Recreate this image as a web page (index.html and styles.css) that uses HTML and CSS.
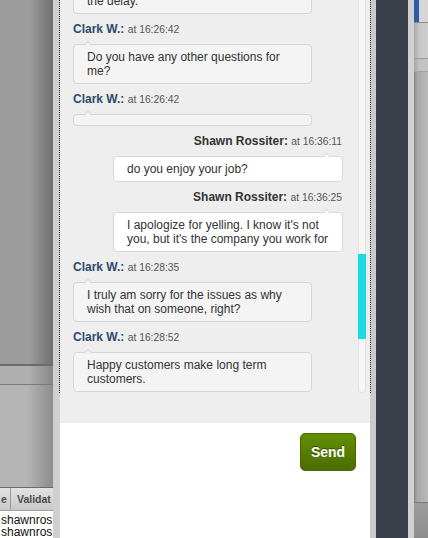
FILE: index.html
```html
<!DOCTYPE html>
<html lang="en">
<head>
<meta charset="utf-8">
<title>Chat</title>
<link rel="stylesheet" href="styles.css">
</head>
<body>
<div class="screen">
  <div class="desk-left">
    <div class="dl-top"></div>
    <div class="dl-bar"></div>
    <div class="dl-mid"></div>
    <div class="dl-head">
      <span class="dl-cell dl-cell-a">e</span>
      <span class="dl-cell dl-cell-b">Validat</span>
    </div>
    <div class="dl-rows">
      <div class="dl-row">shawnros</div>
      <div class="dl-row">shawnros</div>
    </div>
  </div>
  <div class="edge edge-left"></div>
  <div class="chat">
    <div class="log-wrap">
      <div class="log">
        <div class="msg msg-in">
          <div class="msg-head"><span class="who">Clark W.:</span> <span class="when">at 16:26:30</span></div>
          <div class="bubble">I'm really sorry about<br>the delay.</div>
        </div>
        <div class="msg msg-in">
          <div class="msg-head"><span class="who">Clark W.:</span> <span class="when">at 16:26:42</span></div>
          <div class="bubble">Do you have any other questions for me?</div>
        </div>
        <div class="msg msg-in">
          <div class="msg-head"><span class="who">Clark W.:</span> <span class="when">at 16:26:42</span></div>
          <div class="bubble"></div>
        </div>
        <div class="msg msg-out">
          <div class="msg-head"><span class="who">Shawn Rossiter:</span> <span class="when">at 16:36:11</span></div>
          <div class="bubble">do you enjoy your job?</div>
        </div>
        <div class="msg msg-out">
          <div class="msg-head"><span class="who">Shawn Rossiter:</span> <span class="when">at 16:36:25</span></div>
          <div class="bubble">I apologize for yelling. I know it's not you, but it's the company you work for</div>
        </div>
        <div class="msg msg-in">
          <div class="msg-head"><span class="who">Clark W.:</span> <span class="when">at 16:28:35</span></div>
          <div class="bubble">I truly am sorry for the issues as why wish that on someone, right?</div>
        </div>
        <div class="msg msg-in">
          <div class="msg-head"><span class="who">Clark W.:</span> <span class="when">at 16:28:52</span></div>
          <div class="bubble">Happy customers make long term customers.</div>
        </div>
      </div>
      <div class="scrollbar"><div class="thumb"></div></div>
    </div>
    <div class="log-foot"></div>
    <div class="compose">
      <button class="send" type="button">Send</button>
    </div>
  </div>
  <div class="edge edge-right"></div>
  <div class="dock"></div>
  <div class="edge edge-far"></div>
  <div class="desk-right">
    <div class="dr-top">
      <div class="dr-blue"></div>
      <div class="dr-grey"></div>
    </div>
    <div class="dr-bar"></div>
    <div class="dr-bar2"></div>
    <div class="dr-main"></div>
    <div class="dr-foot"></div>
  </div>
</div>
</body>
</html>
```
FILE: styles.css
```css
html, body {
  margin: 0;
  padding: 0;
}

body {
  font-family: "Liberation Sans", Arial, sans-serif;
  background: #9c9c9c;
  overflow: hidden;
}

.screen {
  display: flex;
  width: 428px;
  height: 538px;
}

/* ---------- desktop app behind, left ---------- */
.desk-left {
  flex: none;
  width: 53px;
  display: flex;
  flex-direction: column;
  overflow: hidden;
}

.dl-top {
  height: 364px;
  background: linear-gradient(to right, #9c9c9c 55%, #6f6f6f);
}

.dl-bar {
  height: 18px;
  border-top: 2px solid #6c6c6c;
  border-bottom: 1px solid #7a7a7a;
  background: linear-gradient(to right, #afafaf 55%, #868686);
}

.dl-mid {
  flex: 1;
  border-bottom: 1px solid #6a6a6a;
  background: linear-gradient(to right, #b5b5b5 50%, #8d8d8d);
}

.dl-head {
  height: 22px;
  display: flex;
  align-items: center;
  border-bottom: 1px solid #a3a3a3;
  background: linear-gradient(#e3e3e3, #c8c8c8);
  font-family: "Liberation Sans", Arial, sans-serif;
  font-weight: bold;
  font-size: 10.5px;
  color: #4a4a4a;
}

.dl-cell {
  display: flex;
  height: 100%;
  align-items: center;
  white-space: nowrap;
}

.dl-cell-a {
  flex: none;
  width: 11px;
  padding-left: 1px;
  box-sizing: border-box;
  border-right: 1px solid #9a9a9a;
}

.dl-cell-b {
  padding-left: 6px;
}

.dl-rows {
  height: 27px;
  box-sizing: border-box;
  padding: 4px 0 0 1px;
  background: #fff;
  font-family: "Liberation Sans", Arial, sans-serif;
  font-size: 12px;
  line-height: 11.5px;
  color: #111;
  white-space: nowrap;
}

/* ---------- window edges ---------- */
.edge {
  flex: none;
}

.edge-left {
  width: 7px;
  background: #cfcfcf;
}

.edge-right {
  width: 6px;
  background: #cbcbcb;
}

.edge-far {
  width: 6px;
  background: #d0d0d0;
}

.dock {
  flex: none;
  width: 32px;
  background: #3a414b;
}

/* ---------- chat panel ---------- */
.chat {
  flex: none;
  width: 310px;
  display: flex;
  flex-direction: column;
  background: #fff;
}

.log-wrap {
  position: relative;
  margin: 0 -1px;
  border-left: 1px dotted #222;
  border-right: 1px dotted #222;
}

.log {
  height: 393px;
  box-sizing: border-box;
  display: flex;
  flex-direction: column;
  justify-content: flex-end;
  overflow: hidden;
  padding: 0 27px 1px 13px;
  background: #eeeeee;
}

.msg {
  flex: none;
  margin-top: 7px;
}

.msg-head {
  height: 16px;
  line-height: 16px;
  font-size: 12px;
  white-space: nowrap;
}

.who {
  font-weight: bold;
}

.when {
  font-size: 10.3px;
  color: #555;
}

.msg-in .who {
  color: #2e4a6b;
}

.msg-out .who {
  color: #333;
}

.msg-out .msg-head {
  text-align: right;
  padding-right: 1px;
}

.bubble {
  position: relative;
  margin-top: 7px;
  padding: 5px 13px;
  border: 1px solid #d5d5d5;
  border-radius: 4px;
  font-size: 12px;
  line-height: 14px;
  color: #333;
}

.bubble::before {
  content: "";
  position: absolute;
  top: -3px;
  width: 5px;
  height: 5px;
  background: inherit;
  border-top: 1px solid;
  border-left: 1px solid;
  border-color: inherit;
  transform: rotate(45deg);
}

.msg-in .bubble {
  margin-right: 31px;
  background: #f4f4f4;
  border-color: #d5d5d5;
}

.msg-in .bubble::before {
  left: 11px;
}

.msg-out .bubble {
  margin-left: 40px;
  padding-right: 8px;
  background: #fff;
  border-color: #d9d9d9;
}

.msg-out .bubble::before {
  right: 12px;
}

.scrollbar {
  position: absolute;
  top: 0;
  right: 4px;
  width: 8px;
  height: 393px;
  box-sizing: border-box;
  border: 1px solid #e4e4e4;
  border-top: none;
  border-radius: 0 0 4px 4px;
  background: #f6f6f6;
}

.thumb {
  position: absolute;
  top: 254px;
  left: -1px;
  right: -1px;
  height: 85px;
  background: #19dbe6;
}

.log-foot {
  height: 30px;
  background: #eeeeee;
}

.compose {
  flex: 1;
  display: flex;
  justify-content: flex-end;
  align-items: flex-start;
  padding: 10px 14px 0 0;
  background: #fff;
}

.send {
  width: 56px;
  height: 38px;
  padding: 0;
  border: 1px solid #4a6a00;
  border-radius: 5px;
  background: linear-gradient(#638f00, #4b6c00);
  color: #fff;
  font-family: "Liberation Sans", Arial, sans-serif;
  font-weight: bold;
  font-size: 14px;
  text-shadow: 0 -1px 0 rgba(0, 0, 0, 0.45);
  cursor: pointer;
}

/* ---------- desktop app behind, right ---------- */
.desk-right {
  flex: none;
  width: 14px;
  display: flex;
  flex-direction: column;
}

.dr-top {
  height: 22px;
  display: flex;
  border-bottom: 1px solid #8a8a8a;
}

.dr-blue {
  width: 5px;
  background: #2c5ca9;
}

.dr-grey {
  flex: 1;
  background: #d6d6d6;
}

.dr-bar {
  height: 35px;
  border-bottom: 1px solid #9c9c9c;
  background: linear-gradient(to right, #a9a9a9, #c8c8c8 40%, #cdcdcd);
}

.dr-bar2 {
  height: 12px;
  border-bottom: 1px solid #a4a4a4;
  background: linear-gradient(to right, #a6a6a6, #c2c2c2 40%);
}

.dr-main {
  flex: 1;
  background: linear-gradient(to right, #858585, #a8a8a8 25%, #bababa);
}

.dr-foot {
  height: 35px;
  border-top: 1px solid #7a7a7a;
  background: linear-gradient(#9c9c9c, #8c8c8c);
}
```
